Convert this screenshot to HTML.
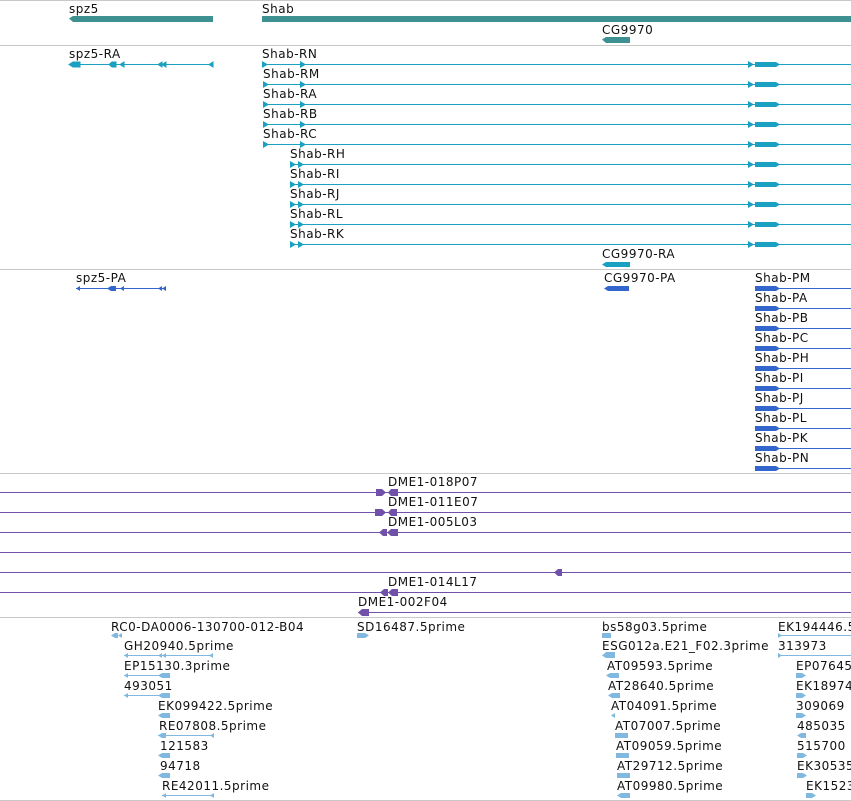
<!DOCTYPE html>
<html><head><meta charset="utf-8"><style>
html,body{margin:0;padding:0;background:#fff;width:851px;height:801px;overflow:hidden}
svg{display:block}
text{font-family:"DejaVu Sans","Liberation Sans",sans-serif;font-size:12px;letter-spacing:0.5px;fill:#111}
</style></head><body>
<svg width="851" height="801" viewBox="0 0 851 801">
<g stroke="#c8c8c8" stroke-width="1">
<line x1="0" y1="0.5" x2="851" y2="0.5"/><line x1="0" y1="45.5" x2="851" y2="45.5"/>
<line x1="0" y1="269.5" x2="851" y2="269.5"/><line x1="0" y1="473.5" x2="851" y2="473.5"/>
<line x1="0" y1="617.5" x2="851" y2="617.5"/><line x1="0" y1="800.5" x2="851" y2="800.5"/>
</g>
<text x="69" y="13">spz5</text><text x="262" y="13">Shab</text><text x="602" y="34">CG9970</text>
<g fill="#3f9090">
<polygon points="69,18.5 73,16 213,16 213,22 73,22"/>
<rect x="262" y="16" width="589" height="6"/>
<polygon points="602,39.5 606,37 630,37 630,43 606,43"/>
</g>
<g fill="#1aa0c0" stroke="#1aa0c0">
<line x1="69" y1="64.5" x2="213" y2="64.5"/>
<polygon points="69,64.5 73,62 80,62 80,67 73,67"/><polygon points="109,64.5 112,62 116,62 116,67 112,67"/>
<polygon points="120,64.5 124,62 124,67"/><polygon points="158,64.5 162,62 162,67"/><polygon points="162,64.5 166,62 166,67"/><polygon points="209,64.5 213,62 213,67"/>
</g>
<text x="69" y="58">spz5-RA</text>
<text x="262" y="58">Shab-RN</text><text x="263" y="78">Shab-RM</text><text x="263" y="98">Shab-RA</text><text x="263" y="118">Shab-RB</text><text x="263" y="138">Shab-RC</text>
<text x="290" y="158">Shab-RH</text><text x="290" y="178">Shab-RI</text><text x="290" y="198">Shab-RJ</text><text x="290" y="218">Shab-RL</text><text x="290" y="238">Shab-RK</text>
<text x="602" y="258">CG9970-RA</text>
<g fill="#1aa0c0">
<rect x="262" y="64" width="589" height="1"/><rect x="263" y="84" width="588" height="1"/><rect x="263" y="104" width="588" height="1"/><rect x="263" y="124" width="588" height="1"/><rect x="263" y="144" width="588" height="1"/>
<rect x="290" y="164" width="561" height="1"/><rect x="290" y="184" width="561" height="1"/><rect x="290" y="204" width="561" height="1"/><rect x="290" y="224" width="561" height="1"/><rect x="290" y="244" width="561" height="1"/>
<polygon points="262,61 268,64.5 262,68"/><polygon points="300,61 306,64.5 300,68"/><polygon points="748,61 754,64.5 748,68"/><polygon points="755,62 776,62 780,64.5 776,67 755,67"/>
<polygon points="263,81 269,84.5 263,88"/><polygon points="300,81 306,84.5 300,88"/><polygon points="748,81 754,84.5 748,88"/><polygon points="755,82 776,82 780,84.5 776,87 755,87"/>
<polygon points="263,101 269,104.5 263,108"/><polygon points="300,101 306,104.5 300,108"/><polygon points="748,101 754,104.5 748,108"/><polygon points="755,102 776,102 780,104.5 776,107 755,107"/>
<polygon points="263,121 269,124.5 263,128"/><polygon points="300,121 306,124.5 300,128"/><polygon points="748,121 754,124.5 748,128"/><polygon points="755,122 776,122 780,124.5 776,127 755,127"/>
<polygon points="263,141 269,144.5 263,148"/><polygon points="300,141 306,144.5 300,148"/><polygon points="748,141 754,144.5 748,148"/><polygon points="755,142 776,142 780,144.5 776,147 755,147"/>
<polygon points="290,161 296,164.5 290,168"/><polygon points="298,161 304,164.5 298,168"/><polygon points="748,161 754,164.5 748,168"/><polygon points="755,162 776,162 780,164.5 776,167 755,167"/>
<polygon points="290,181 296,184.5 290,188"/><polygon points="298,181 304,184.5 298,188"/><polygon points="748,181 754,184.5 748,188"/><polygon points="755,182 776,182 780,184.5 776,187 755,187"/>
<polygon points="290,201 296,204.5 290,208"/><polygon points="298,201 304,204.5 298,208"/><polygon points="748,201 754,204.5 748,208"/><polygon points="755,202 776,202 780,204.5 776,207 755,207"/>
<polygon points="290,221 296,224.5 290,228"/><polygon points="298,221 304,224.5 298,228"/><polygon points="748,221 754,224.5 748,228"/><polygon points="755,222 776,222 780,224.5 776,227 755,227"/>
<polygon points="290,241 296,244.5 290,248"/><polygon points="298,241 304,244.5 298,248"/><polygon points="748,241 754,244.5 748,248"/><polygon points="755,242 776,242 780,244.5 776,247 755,247"/>
<polygon points="602,264.5 606,262 630,262 630,267 606,267"/>
</g>
<text x="76" y="282">spz5-PA</text><text x="604" y="282">CG9970-PA</text>
<text x="755" y="282">Shab-PM</text><text x="755" y="302">Shab-PA</text><text x="755" y="322">Shab-PB</text><text x="755" y="342">Shab-PC</text><text x="755" y="362">Shab-PH</text>
<text x="755" y="382">Shab-PI</text><text x="755" y="402">Shab-PJ</text><text x="755" y="422">Shab-PL</text><text x="755" y="442">Shab-PK</text><text x="755" y="462">Shab-PN</text>
<g fill="#3366cc">
<rect x="76" y="288" width="90" height="1"/>
<polygon points="76,288.5 80,286 80,291"/><polygon points="107,288.5 111,286 116,286 116,291 111,291"/><polygon points="120,288.5 124,286 124,291"/><polygon points="158,288.5 162,286 162,291"/><polygon points="162,288.5 166,286 166,291"/>
<polygon points="604,288.5 608,286 629,286 629,291 608,291"/>
<g id="p">
<rect x="755" y="288" width="96" height="1"/><polygon points="755,286 776,286 780,288.5 776,291 755,291"/>
</g>
<use href="#p" y="20"/><use href="#p" y="40"/><use href="#p" y="60"/><use href="#p" y="80"/><use href="#p" y="100"/><use href="#p" y="120"/><use href="#p" y="140"/><use href="#p" y="160"/><use href="#p" y="180"/>
</g>
<text x="388" y="486">DME1-018P07</text><text x="388" y="506">DME1-011E07</text><text x="388" y="526">DME1-005L03</text><text x="388" y="586">DME1-014L17</text><text x="358" y="606">DME1-002F04</text>
<g fill="#7050a8">
<rect x="0" y="492" width="851" height="1"/><rect x="0" y="512" width="851" height="1"/><rect x="0" y="532" width="851" height="1"/><rect x="0" y="552" width="851" height="1"/><rect x="0" y="572" width="851" height="1"/><rect x="0" y="592" width="851" height="1"/><rect x="358" y="612" width="493" height="1"/>
<polygon points="376,489 382,489 386,492.5 382,496 376,496"/><polygon points="388,492.5 391,489 398,489 398,496 391,496"/>
<polygon points="375,509 382,509 386,512.5 382,516 375,516"/><polygon points="388,512.5 391,509 397,509 397,516 391,516"/>
<polygon points="379,532.5 383,529 387,529 387,536 383,536"/><polygon points="387,532.5 391,529 398,529 398,536 391,536"/>
<polygon points="554,572.5 558,569 562,569 562,576 558,576"/>
<polygon points="380,592.5 384,589 388,589 388,596 384,596"/><polygon points="388,592.5 392,589 398,589 398,596 392,596"/>
<polygon points="358,612.5 362,609 369,609 369,616 362,616"/>
</g>
<text x="111" y="631">RC0-DA0006-130700-012-B04</text><text x="357" y="631">SD16487.5prime</text>
<text x="124" y="650">GH20940.5prime</text><text x="124" y="670">EP15130.3prime</text><text x="124" y="690">493051</text>
<text x="158" y="710">EK099422.5prime</text><text x="159" y="730">RE07808.5prime</text><text x="160" y="750">121583</text><text x="160" y="770">94718</text><text x="162" y="790">RE42011.5prime</text>
<text x="602" y="631">bs58g03.5prime</text><text x="602" y="650">ESG012a.E21_F02.3prime</text><text x="607" y="670">AT09593.5prime</text><text x="608" y="690">AT28640.5prime</text><text x="611" y="710">AT04091.5prime</text><text x="615" y="730">AT07007.5prime</text><text x="616" y="750">AT09059.5prime</text><text x="617" y="770">AT29712.5prime</text><text x="617" y="790">AT09980.5prime</text>
<text x="778" y="631">EK194446.5</text><text x="778" y="650">313973</text><text x="796" y="670">EP07645</text><text x="796" y="690">EK18974</text><text x="796" y="710">309069</text><text x="797" y="730">485035</text><text x="797" y="750">515700</text><text x="797" y="770">EK30535</text><text x="806" y="790">EK1523</text>
<g fill="#80b8e0">
<polygon points="111,635.5 115,633 118,633 118,638 115,638"/><polygon points="118,635.5 122,633 122,638"/>
<rect x="124" y="655" width="89" height="1"/><polygon points="124,655.5 128,653 128,658"/><polygon points="158,655.5 162,653 162,658"/><polygon points="162,655.5 166,653 166,658"/><polygon points="209,655.5 213,653 213,658"/>
<rect x="124" y="675" width="46" height="1"/><polygon points="124,675.5 128,673 128,678"/><polygon points="158,675.5 162,673 170,673 170,678 162,678"/>
<rect x="124" y="695" width="46" height="1"/><polygon points="124,695.5 128,693 128,698"/><polygon points="158,695.5 162,693 170,693 170,698 162,698"/>
<polygon points="158,715.5 162,713 170,713 170,718 162,718"/>
<rect x="158" y="735" width="56" height="1"/><polygon points="158,735.5 162,733 166,733 166,738 162,738"/><polygon points="210,735.5 214,733 214,738"/>
<polygon points="158,755.5 162,753 170,753 170,758 162,758"/>
<polygon points="158,775.5 162,773 170,773 170,778 162,778"/>
<rect x="162" y="795" width="52" height="1"/><polygon points="162,795.5 166,793 166,798"/><polygon points="210,795.5 214,793 214,798"/>
<polygon points="357,633 365,633 369,635.5 365,638 357,638"/>
<rect x="602" y="633" width="9" height="5"/><polygon points="602,655.5 606,652 615,652 615,658 606,658"/>
<polygon points="606,675.5 610,673 619,673 619,678 610,678"/><polygon points="608,695.5 612,693 620,693 620,698 612,698"/>
<polygon points="611,715.5 615,713 615,718"/><rect x="615" y="733" width="13" height="5"/><rect x="616" y="753" width="13" height="5"/><rect x="617" y="773" width="13" height="5"/><polygon points="617,795.5 621,793 630,793 630,798 621,798"/>
<rect x="778" y="635" width="73" height="1"/><polygon points="778,633 782,635.5 778,638"/>
<rect x="778" y="655" width="73" height="1"/><polygon points="778,653 782,655.5 778,658"/>
<polygon points="796,673 802,673 806,675.5 802,678 796,678"/><polygon points="796,693 802,693 806,695.5 802,698 796,698"/><polygon points="796,713 802,713 806,715.5 802,718 796,718"/>
<polygon points="797,735.5 801,733 806,733 806,738 801,738"/><polygon points="797,753 803,753 807,755.5 803,758 797,758"/><polygon points="797,773 803,773 807,775.5 803,778 797,778"/><polygon points="806,793 812,793 816,795.5 812,798 806,798"/>
</g>
</svg>
</body></html>
